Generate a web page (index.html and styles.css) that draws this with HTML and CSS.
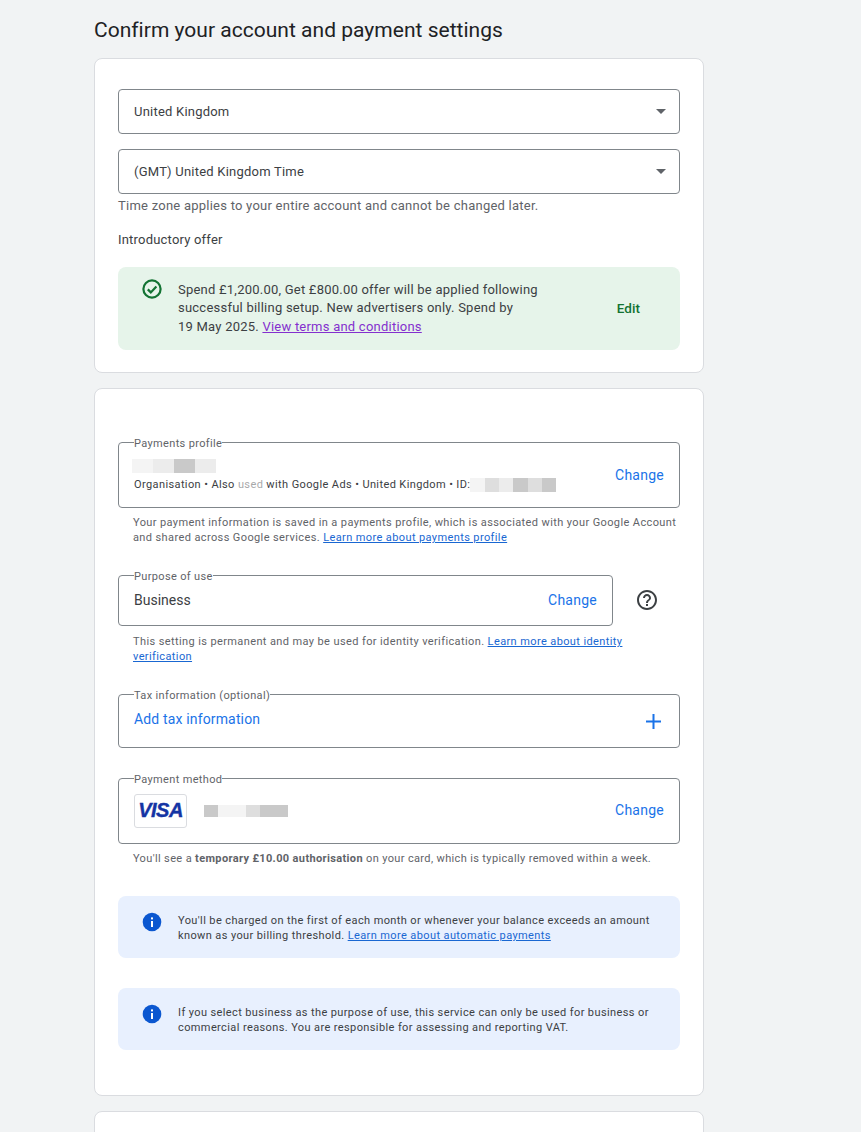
FILE: index.html
```html
<!DOCTYPE html>
<html lang="en">
<head>
<meta charset="utf-8">
<title>Confirm your account and payment settings</title>
<link rel="stylesheet" href="styles.css">
</head>
<body>
<main class="page">
  <h1 class="title">Confirm your account and payment settings</h1>

  <section class="card card-one">
    <div class="select"><span>United Kingdom</span><i class="caret"></i></div>
    <div class="select select-second"><span>(GMT) United Kingdom Time</span><i class="caret"></i></div>
    <p class="zone-help">Time zone applies to your entire account and cannot be changed later.</p>
    <p class="offer-label">Introductory offer</p>
    <div class="offer">
      <svg class="offer-icon" viewBox="0 0 20 20" width="20" height="20" fill="none" stroke="#137333" stroke-width="2.2"><circle cx="10" cy="10" r="8.6"/><path d="M5.8 10.4l3 3 5.6-5.8"/></svg>
      <p class="offer-text">Spend £1,200.00, Get £800.00 offer will be applied following successful billing setup. New advertisers only. Spend by<br>19 May 2025. <a class="visited" href="#">View terms and conditions</a></p>
      <span class="edit">Edit</span>
    </div>
  </section>

  <section class="card card-two">
    <fieldset class="box box-profile">
      <legend>Payments profile</legend>
      <div class="box-main">
        <div class="redact redact-name"><b class="pale"></b><b></b><b class="dark"></b><b></b></div>
        <div class="profile-meta">Organisation • Also <span class="smudge">used</span> with Google Ads • United Kingdom • ID:<span class="redact redact-id"><b class="pale"></b><b class="mid"></b><b></b><b class="dark"></b><b class="mid"></b><b class="dark"></b></span></div>
      </div>
      <span class="action">Change</span>
    </fieldset>
    <p class="help help-profile">Your payment information is saved in a payments profile, which is associated with your Google Account and shared across Google services. <a href="#">Learn more about payments profile</a></p>

    <div class="purpose-row">
      <fieldset class="box box-purpose">
        <legend>Purpose of use</legend>
        <span class="value">Business</span>
        <span class="action">Change</span>
      </fieldset>
      <svg class="help-icon" viewBox="0 0 24 24" width="24" height="24" fill="#3c4043"><path d="M11 18h2v-2h-2v2zm1-16C6.48 2 2 6.48 2 12s4.48 10 10 10 10-4.48 10-10S17.52 2 12 2zm0 18c-4.41 0-8-3.59-8-8s3.59-8 8-8 8 3.59 8 8-3.59 8-8 8zm0-14c-2.21 0-4 1.79-4 4h2c0-1.1.9-2 2-2s2 .9 2 2c0 2-3 1.75-3 5h2c0-2.25 3-2.5 3-5 0-2.21-1.79-4-4-4z"/></svg>
    </div>
    <p class="help help-purpose">This setting is permanent and may be used for identity verification. <a href="#">Learn more about identity verification</a></p>

    <fieldset class="box box-tax">
      <legend>Tax information (optional)</legend>
      <span class="add">Add tax information</span>
      <svg class="plus" viewBox="0 0 15 15" width="15" height="15" fill="none" stroke="#1a73e8" stroke-width="2"><path d="M7.5 0v15M0 7.5h15"/></svg>
    </fieldset>

    <fieldset class="box box-method">
      <legend>Payment method</legend>
      <div class="visa"><span>VISA</span></div>
      <div class="redact redact-card"><b class="dark"></b><b class="pale"></b><b class="pale"></b><b class="mid"></b><b class="dark"></b><b class="dark"></b></div>
      <span class="action action-method">Change</span>
    </fieldset>
    <p class="help help-method">You'll see a <strong>temporary £10.00 authorisation</strong> on your card, which is typically removed within a week.</p>

    <div class="notice notice-first">
      <svg viewBox="0 0 20 20" width="20" height="20"><circle cx="10" cy="10" r="9.3" fill="#0b57d0"/><rect x="9" y="9" width="2" height="6" fill="#fff"/><rect x="9" y="5.4" width="2" height="2" fill="#fff"/></svg>
      <p>You'll be charged on the first of each month or whenever your balance exceeds an amount known as your billing threshold. <a href="#">Learn more about automatic payments</a></p>
    </div>
    <div class="notice notice-second">
      <svg viewBox="0 0 20 20" width="20" height="20"><circle cx="10" cy="10" r="9.3" fill="#0b57d0"/><rect x="9" y="9" width="2" height="6" fill="#fff"/><rect x="9" y="5.4" width="2" height="2" fill="#fff"/></svg>
      <p>If you select business as the purpose of use, this service can only be used for business or commercial reasons. You are responsible for assessing and reporting VAT.</p>
    </div>
  </section>

  <section class="card card-three"></section>
</main>
</body>
</html>
```
FILE: styles.css
```css
* { box-sizing: border-box; }
html, body { margin: 0; height: 1132px; overflow: hidden; }
body { background: #f1f3f4; font-family: Roboto, "Liberation Sans", sans-serif; color: #3c4043; }
p { margin: 0; }
a { color: #1967d2; }
a.visited { color: #8430ce; }

.page { width: 610px; margin-left: 94px; }
.title { margin: 0; padding-top: 16px; height: 58px; font-size: 21px; line-height: 28px; font-weight: 400; letter-spacing: .02px; color: #202124; }

.card { background: #fff; border: 1px solid #dadce0; border-radius: 8px; padding: 0 23px; margin-bottom: 15px; }
.card-one { height: 315px; padding-top: 30px; }
.card-two { height: 708px; padding-top: 46px; }
.card-three { height: 60px; margin-bottom: 0; }

.select { height: 45px; border: 1px solid #80868b; border-radius: 4px; padding: 0 15px; display: flex; align-items: center; justify-content: space-between; font-size: 13px; letter-spacing: .22px; }
.select-second { margin-top: 15px; }
.caret { width: 0; height: 0; border-left: 5px solid transparent; border-right: 5px solid transparent; border-top: 5px solid #5f6368; margin-right: -2px; }
.zone-help { margin-top: 4px; font-size: 13px; line-height: 16px; letter-spacing: .24px; color: #5f6368; }
.offer-label { margin-top: 18px; font-size: 13px; line-height: 16px; letter-spacing: .2px; }

.offer { margin-top: 19px; height: 83px; background: #e6f4ea; border-radius: 8px; padding: 14px 40px 0 24px; display: flex; align-items: flex-start; }
.offer-icon { flex: none; margin: -2px 16px 0 0; }
.offer-text { width: 370px; font-size: 13px; line-height: 18.3px; letter-spacing: .23px; }
.edit { margin-left: auto; margin-top: 19px; font-size: 13.5px; line-height: 16px; font-weight: 500; letter-spacing: .05px; color: #137333; }

.box { margin: 0; min-width: 0; border: 1px solid #80868b; border-radius: 4px; padding: 0 15px; display: flex; align-items: center; }
.box legend { padding: 2px 0 0; font-size: 11px; line-height: 13px; letter-spacing: .35px; color: #5f6368; }
.action { margin-left: auto; font-size: 14px; letter-spacing: .25px; color: #1a73e8; }

.box-profile { height: 73px; padding-bottom: 8px; }
.box-main { flex: 1; }
.redact { display: flex; height: 14px; }
.redact b { display: block; flex: 1; background: #ececec; }
.redact b.mid { background: #dedede; }
.redact b.dark { background: #c9c9c9; }
.redact b.pale { background: #f4f4f4; }
.redact-name { width: 84px; margin: 1px 0 0 -2px; }
.profile-meta { margin-top: 5px; font-size: 11px; line-height: 14px; letter-spacing: .39px; display: flex; white-space: pre; }
.smudge { opacity: .45; }
.redact-id { width: 86px; }

.help { font-size: 11px; line-height: 15px; letter-spacing: .39px; color: #5f6368; padding-left: 15px; }
.help-profile { margin-top: 7px; }
.help strong { font-weight: 700; }

.purpose-row { margin-top: 23px; display: flex; align-items: flex-end; }
.box-purpose { width: 495px; height: 58px; padding-bottom: 8px; }
.value { font-size: 14px; }
.help-icon { margin: 0 0 14px 22px; }
.help-purpose { margin-top: 8px; }

.box-tax { height: 61px; margin-top: 23px; align-items: flex-start; }
.add { margin-top: 9px; font-size: 14px; letter-spacing: .15px; color: #1a73e8; }
.plus { margin: 12px 3px 0 auto; }

.box-method { height: 73px; margin-top: 23px; padding-bottom: 8px; }
.visa { width: 53px; height: 34px; border: 1px solid #dadce0; border-radius: 3px; display: flex; align-items: center; justify-content: center; }
.visa span { font-family: "Liberation Sans", sans-serif; font-style: italic; font-weight: 700; font-size: 20px; color: #1434a4; letter-spacing: -.5px; -webkit-text-stroke: .4px #1434a4; }
.redact-card { width: 84px; margin-left: 17px; height: 12px; }
.action-method { margin-bottom: 2px; }
.help-method { margin-top: 7px; letter-spacing: .36px; }

.notice { height: 62px; background: #e8f0fe; border-radius: 8px; padding: 17px 24px 0; display: flex; align-items: flex-start; }
.notice svg { flex: none; margin: -1px 16px 0 0; }
.notice p { font-size: 11px; line-height: 15px; letter-spacing: .39px; }
.notice-first { margin-top: 30px; }
.notice-second { margin-top: 30px; }
```
